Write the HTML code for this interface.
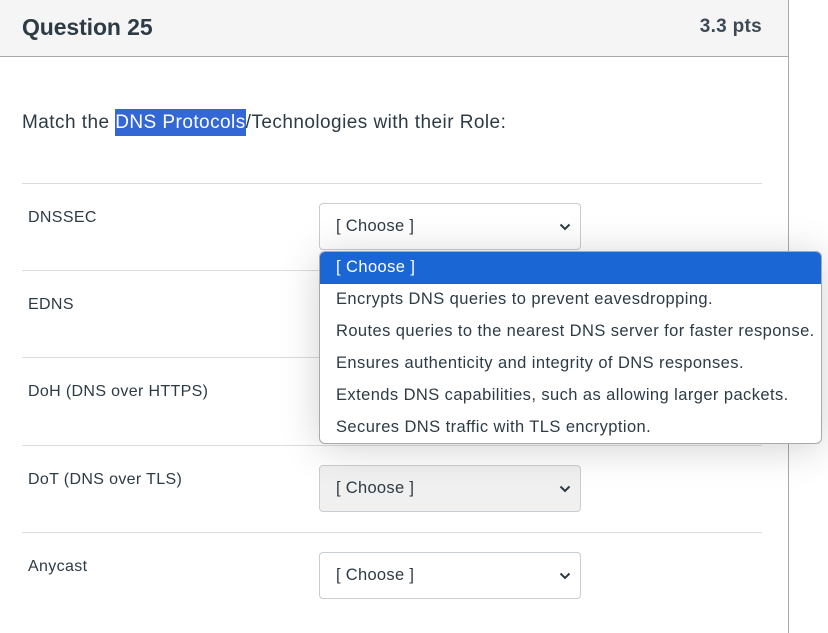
<!DOCTYPE html>
<html><head><style>
*{margin:0;padding:0;box-sizing:border-box}
body{width:828px;height:633px;overflow:hidden;background:#fff;font-family:"Liberation Sans",sans-serif;color:#2d3b45;position:relative}
.hdr{position:absolute;left:0;top:0;width:788px;height:57px;background:#f5f5f5;border-bottom:1px solid #aaa}
.vr{position:absolute;left:788px;top:0;width:1px;height:633px;background:#aaa}
.t{position:absolute;font-size:23px;font-weight:bold;letter-spacing:-0.1px;top:14px;left:22px}
.p{position:absolute;font-size:19px;font-weight:bold;color:#3d4a55;letter-spacing:0.3px;top:16px;right:26px}
.q{position:absolute;left:22px;top:109px;font-size:19px;letter-spacing:0.45px;line-height:28px}
.hl{background:#3367d6;color:#fff;display:inline-block;line-height:27px}
.ln{position:absolute;left:22px;width:740px;height:1px;background:#dcdcdc}
.lb{position:absolute;left:28px;font-size:16px;letter-spacing:0.35px}
.sel{position:absolute;left:319px;width:262px;height:47px;border:1px solid #c7cdd1;border-radius:4px;background:#fff;font-size:16.5px;letter-spacing:0.3px;padding:13px 0 0 16px}
.sel svg{position:absolute;right:9px;top:19px}
.dd{position:absolute;left:319px;top:251px;width:503px;height:193px;background:#fff;border:1px solid #a9a9a9;border-radius:6px;overflow:hidden;box-shadow:0 4px 40px rgba(0,0,0,.18)}
.it{height:32px;line-height:30px;padding-left:16px;font-size:16.5px;letter-spacing:0.42px;color:#2d3b45;white-space:nowrap}
.it.a{background:#1a66d4;color:#fff}
</style></head><body>
<div class="hdr"><div class="t">Question 25</div><div class="p">3.3 pts</div></div>
<div class="vr"></div>
<div class="q">Match the <span class="hl">DNS Protocols</span>/Technologies with their Role:</div>
<div class="ln" style="top:183px"></div>
<div class="ln" style="top:270px"></div>
<div class="ln" style="top:357px"></div>
<div class="ln" style="top:445px"></div>
<div class="ln" style="top:532px"></div>
<div class="lb" style="top:209px">DNSSEC</div>
<div class="lb" style="top:296px">EDNS</div>
<div class="lb" style="top:383px">DoH (DNS over HTTPS)</div>
<div class="lb" style="top:471px">DoT (DNS over TLS)</div>
<div class="lb" style="top:558px">Anycast</div>
<div class="sel" style="top:203px">[ Choose ]<svg width="12" height="8" viewBox="0 0 12 8"><path d="M1.5 1.5L6 6L10.5 1.5" fill="none" stroke="#2d3b45" stroke-width="2"/></svg></div>
<div class="sel" style="top:465px;background:#f0f0f0">[ Choose ]<svg width="12" height="8" viewBox="0 0 12 8"><path d="M1.5 1.5L6 6L10.5 1.5" fill="none" stroke="#2d3b45" stroke-width="2"/></svg></div>
<div class="sel" style="top:552px">[ Choose ]<svg width="12" height="8" viewBox="0 0 12 8"><path d="M1.5 1.5L6 6L10.5 1.5" fill="none" stroke="#2d3b45" stroke-width="2"/></svg></div>
<div class="dd">
<div class="it a">[ Choose ]</div>
<div class="it">Encrypts DNS queries to prevent eavesdropping.</div>
<div class="it">Routes queries to the nearest DNS server for faster response.</div>
<div class="it">Ensures authenticity and integrity of DNS responses.</div>
<div class="it">Extends DNS capabilities, such as allowing larger packets.</div>
<div class="it">Secures DNS traffic with TLS encryption.</div>
</div>
</body></html>
